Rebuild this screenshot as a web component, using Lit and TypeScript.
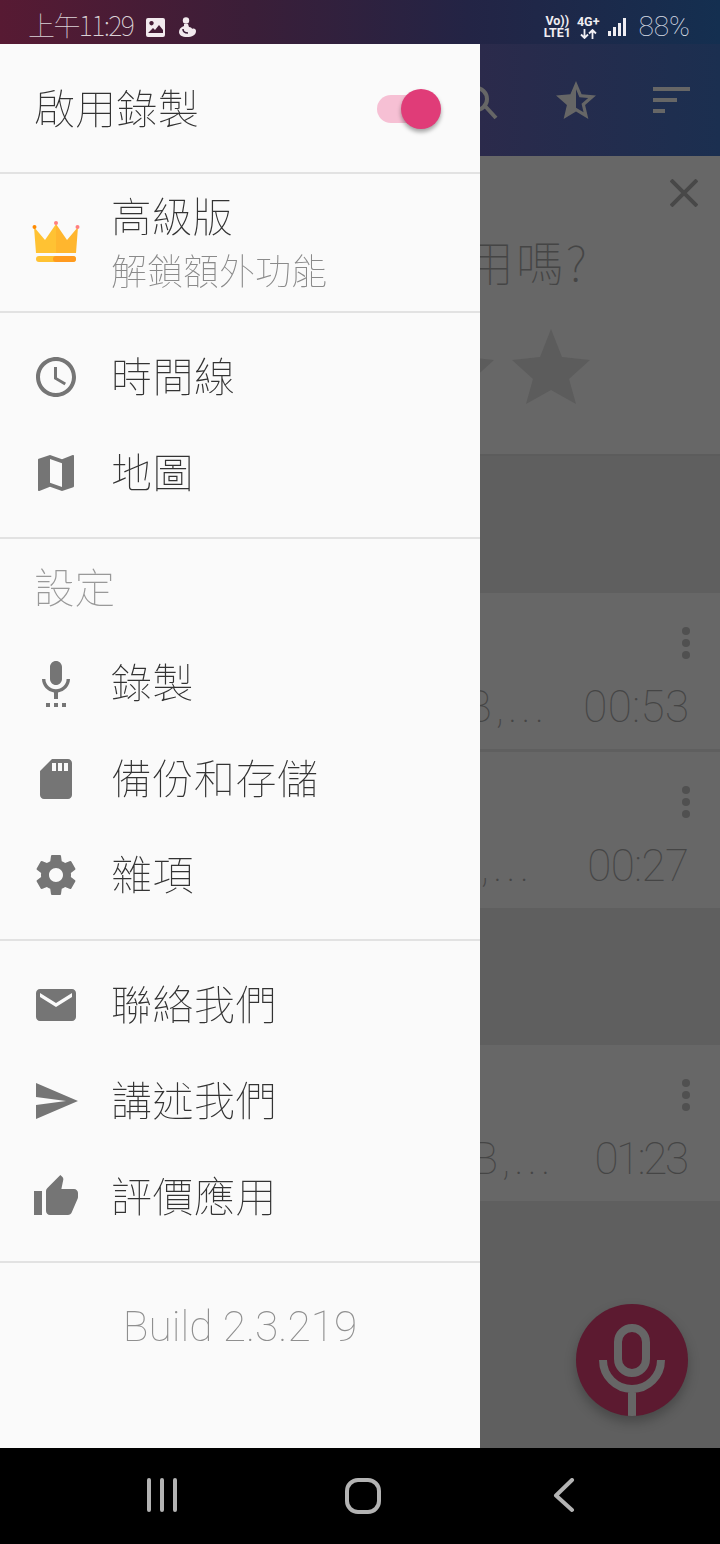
import { LitElement, html, css, svg } from "lit";
import { customElement } from "lit/decorators.js";

const P = {
  clock: "M11.99 2C6.47 2 2 6.48 2 12s4.47 10 9.99 10C17.52 22 22 17.52 22 12S17.52 2 11.99 2zM12 20c-4.42 0-8-3.58-8-8s3.58-8 8-8 8 3.58 8 8-3.58 8-8 8zm.5-13H11v6l5.25 3.15.75-1.23-4.5-2.67z",
  map: "M20.5 3l-.16.03L15 5.1 9 3 3.36 4.9c-.21.07-.36.25-.36.48V20.5c0 .28.22.5.5.5l.16-.03L9 18.9l6 2.1 5.64-1.9c.21-.07.36-.25.36-.48V3.5c0-.28-.22-.5-.5-.5zM15 19l-6-2.11V5l6 2.11V19z",
  voice: "M7 24h2v-2H7v2zm5-11c1.66 0 2.99-1.34 2.99-3L15 4c0-1.66-1.34-3-3-3S9 2.34 9 4v6c0 1.66 1.34 3 3 3zm-1 11h2v-2h-2v2zm4 0h2v-2h-2v2zm4-14h-1.7c0 3-2.54 5.1-5.3 5.1S6.7 13 6.7 10H5c0 3.41 2.72 6.23 6 6.72V20h2v-3.28c3.28-.49 6-3.31 6-6.72z",
  sd: "M18 2h-8L4.02 8 4 20c0 1.1.9 2 2 2h12c1.1 0 2-.9 2-2V4c0-1.1-.9-2-2-2zm-6 6h-2V4h2v4zm3 0h-2V4h2v4zm3 0h-2V4h2v4z",
  gear: "M19.43 12.98c.04-.32.07-.64.07-.98s-.03-.66-.07-.98l2.11-1.65c.19-.15.24-.42.12-.64l-2-3.46c-.12-.22-.39-.3-.61-.22l-2.49 1c-.52-.4-1.08-.73-1.69-.98l-.38-2.65C14.46 2.18 14.25 2 14 2h-4c-.25 0-.46.18-.49.42l-.38 2.65c-.61.25-1.17.59-1.69.98l-2.49-1c-.23-.09-.49 0-.61.22l-2 3.46c-.13.22-.07.49.12.64l2.11 1.65c-.04.32-.07.65-.07.98s.03.66.07.98l-2.11 1.65c-.19.15-.24.42-.12.64l2 3.46c.12.22.39.3.61.22l2.49-1c.52.4 1.08.73 1.69.98l.38 2.65c.03.24.24.42.49.42h4c.25 0 .46-.18.49-.42l.38-2.65c.61-.25 1.17-.59 1.69-.98l2.49 1c.23.09.49 0 .61-.22l2-3.46c.12-.22.07-.49-.12-.64l-2.11-1.65zM12 15.5c-1.93 0-3.5-1.57-3.5-3.5s1.57-3.5 3.5-3.5 3.5 1.57 3.5 3.5-1.57 3.5-3.5 3.5z",
  mail: "M20 4H4c-1.1 0-1.99.9-1.99 2L2 18c0 1.1.9 2 2 2h16c1.1 0 2-.9 2-2V6c0-1.1-.9-2-2-2zm0 4l-8 5-8-5V6l8 5 8-5v2z",
  send: "M2.01 21L23 12 2.01 3 2 10l15 2-15 2z",
  thumb: "M1 21h4V9H1v12zm22-11c0-1.1-.9-2-2-2h-6.31l.95-4.57.03-.32c0-.41-.17-.79-.44-1.06L14.17 1 7.59 7.59C7.22 7.95 7 8.45 7 9v10c0 1.1.9 2 2 2h9c.83 0 1.54-.5 1.84-1.22l3.02-7.05c.09-.23.14-.47.14-.73v-2z",
};

const icon = (d: string) => html`<svg class="ico" viewBox="0 0 24 24"><path d=${d}></path></svg>`;

const row = (d: string, label: string) => html`<div class="row">${icon(d)}<span class="label">${label}</span></div>`;

const clip = (left: string, time: string, gap: number, track: number) => html`
  <div class="rec">
    <svg class="dots" viewBox="0 0 8 36"><circle cx="4" cy="4" r="4"></circle><circle cx="4" cy="16" r="4"></circle><circle cx="4" cy="28" r="4"></circle></svg>
    <div class="recline"><span class="size">${left}</span><span class="time" style="margin-left:${gap}px;letter-spacing:${track}px;margin-right:${-track}px">${time}</span></div>
  </div>`;

const star = svg`<path d="M40 0 L51 28 L79 31 L58 50 L65 75 L40 61 L15 75 L22 50 L1 31 L29 28 Z"></path>`;

@customElement("app-root")
export class AppRoot extends LitElement {
  static styles = css`
    :host { display: block; width: 720px; height: 1544px; overflow: hidden; font-family: "Noto Sans CJK TC", "Noto Sans", sans-serif; font-weight: 100; }
    * { box-sizing: border-box; }
    .status { height: 44px; display: flex; align-items: center; padding: 10px 30px 0 28px; background: linear-gradient(90deg, #571a33 0%, #3a1e38 35%, #232445 65%, #142f50 100%); color: #c9c3cb; }
    .stime { font-size: 27px; line-height: 34px; margin-bottom: 4px; font-weight: 100; letter-spacing: -1.6px; color: #dad2d7; }
    .sico { margin-left: 13px; width: 19px; height: 19px; fill: #f2eaee; flex: none; }
    .sico2 { margin-left: 13px; width: 18px; height: 21px; flex: none; }
    .spacer { flex: 1; }
    .mini { display: flex; flex-direction: column; align-items: center; font: 700 12.500px/12px Roboto, sans-serif; color: #f0eef2; }
    .mini.b { margin-left: 6px; }
    .arrows { width: 17px; height: 10px; margin-top: 1px; fill: none; stroke: #f0eef2; stroke-width: 1.800; }
    .sig { width: 18px; height: 18px; margin-left: 9px; fill: #f0eef2; flex: none; }
    .batt { margin-left: 12px; font: 100 28px/1 Roboto, sans-serif; color: #d8dde5; }

    .body { height: 1404px; display: flex; }
    .drawer { width: 480px; background: #fafafa; display: flex; flex-direction: column; flex: none; color: #333; }
    .head { height: 128px; padding: 0 39px 0 34px; display: flex; align-items: center; justify-content: space-between; font-size: 41px; letter-spacing: .3px; }
    .head span { margin-bottom: 5px; }
    .switch { position: relative; width: 64px; height: 40px; display: flex; align-items: center; margin-top: 1px; }
    .track { width: 44px; height: 28px; border-radius: 14px; background: #f6c0d4; }
    .thumb { position: absolute; right: 0; top: 0; width: 40px; height: 40px; border-radius: 50%; background: #e03c78; box-shadow: 0 3px 4px rgba(0,0,0,.35); }
    .div { height: 2px; background: #e2e2e2; flex: none; }
    .prem { height: 137px; display: flex; align-items: center; padding-left: 32px; }
    .crown { width: 48px; height: 44px; flex: none; margin-top: -2px; }
    .ptext { margin-left: 31px; display: flex; flex-direction: column; gap: 8px; padding-bottom: 4px; }
    .ptitle { font-size: 40.500px; line-height: 48px; }
    .psub { font-size: 36px; line-height: 44px; color: #8a8a8a; }
    .sec { display: flex; flex-direction: column; padding: 16px 0; }
    .sec.tight { padding-top: 0; }
    .row { height: 96px; display: flex; align-items: center; padding-left: 32px; }
    .ico { width: 48px; height: 48px; fill: #757575; flex: none; }
    .label { margin-left: 31px; margin-bottom: 7px; font-size: 41px; line-height: 48px; letter-spacing: .5px; }
    .group { height: 96px; padding: 23px 0 0 34px; font-size: 40.500px; line-height: 48px; color: #999; }
    .build { flex: 1; padding-top: 39px; text-align: center; font: 100 42.500px/50px Roboto, sans-serif; color: #8f8f8f; }

    .panel { position: relative; flex: 1; min-width: 0; overflow: hidden; background: #5f5f5f; display: flex; flex-direction: column; }
    .bar { height: 112px; flex: none; background: linear-gradient(90deg, #2b2a4b 0%, #1b2f50 100%); display: flex; align-items: center; }
    .sb { fill: #666; flex: none; }
    .search { width: 28px; height: 36px; margin-top: 4px; }
    .tstar { width: 40px; height: 38px; margin-left: 48px; }
    .sort { width: 37px; height: 26px; margin-left: 57px; }
    .card { position: relative; height: 300px; flex: none; background: #676767; border-bottom: 2px solid #5c5c5c; }
    .x { position: absolute; right: 22px; top: 23px; width: 28px; height: 28px; stroke: #484848; stroke-width: 4; }
    .q { position: absolute; right: 131px; top: 73px; white-space: nowrap; font-size: 48px; line-height: 62px; letter-spacing: 2px; color: #454545; }
    .stars { display: flex; gap: 16px; justify-content: flex-end; padding: 173px 129px 0 0; }
    .bstar { width: 80px; height: 76px; fill: #5c5c5c; flex: none; }
    .rec { height: 156px; flex: none; background: #676767; position: relative; }
    .dots { position: absolute; right: 30px; top: 34px; width: 8px; height: 36px; fill: #505050; }
    .recline { position: absolute; right: 31px; top: 84px; display: flex; align-items: baseline; white-space: nowrap; color: #454545; }
    .size { font: 100 44px/60px Roboto, sans-serif; letter-spacing: 4px; }
    .time { font: 100 44px/60px Roboto, sans-serif; }
    .m1 { margin-top: 137px; }
    .m2 { margin-top: 3px; }
    .m3 { margin-top: 137px; }
    .fab { position: absolute; left: 96px; bottom: 32px; width: 112px; height: 112px; border-radius: 50%; background: #5c1a30; box-shadow: 0 6px 12px rgba(0,0,0,.25); overflow: hidden; }
    .fab svg { display: block; width: 112px; height: 112px; fill: none; stroke: #666; stroke-width: 8; }

    .nav { height: 96px; background: #000; display: flex; align-items: center; gap: 165px; padding: 0 0 0 144px; }
    .nav svg { width: 36px; height: 36px; fill: none; stroke: #b3b3b3; stroke-width: 4; stroke-linecap: round; stroke-linejoin: round; flex: none; }
    .label, .ptitle, .psub, .group, .head span, .build { will-change: opacity; }
  `;

  render() {
    return html`
      <div class="status">
        <span class="stime">上午11:29</span>
        <svg class="sico" viewBox="0 0 19 19"><path fill-rule="evenodd" d="M2 0h15a2 2 0 0 1 2 2v15a2 2 0 0 1-2 2H2a2 2 0 0 1-2-2V2a2 2 0 0 1 2-2zM2 15h15v-3l-4-5-4 5-2-2-5 5zM5.500 3a2.200 2.200 0 1 0 .01 0z"></path></svg>
        <svg class="sico2" viewBox="0 0 18 21"><circle cx="8" cy="3.500" r="3.200" fill="#f2eaee"></circle><path fill="#f2eaee" d="M6 7h4l1 3c2 0 3 1 3 2 2-1 4 0 4 2 0 4-4 6-9 6-5 0-8-2-8-5 0-3 2-5 5-6z"></path><path fill="none" stroke="#3a1e38" stroke-width="1.600" d="M5 12c0 3 2 4 5 4"></path></svg>
        <span class="spacer"></span>
        <div class="mini"><span>Vo))</span><span>LTE1</span></div>
        <div class="mini b"><span>4G+</span><svg class="arrows" viewBox="0 0 17 10"><path d="M4.500 0v9M1 5.500l3.500 3.500 3.500-3.500M12.500 10V1M9 4.500l3.500-3.500 3.500 3.500"></path></svg></div>
        <svg class="sig" viewBox="0 0 18 18"><rect x="0" y="13" width="3" height="5"></rect><rect x="5" y="9" width="3" height="9"></rect><rect x="10" y="5" width="3" height="13"></rect><rect x="15" y="0" width="3" height="18"></rect></svg>
        <span class="batt">88%</span>
      </div>

      <div class="body">
        <aside class="drawer">
          <div class="head"><span>啟用錄製</span><div class="switch"><div class="track"></div><div class="thumb"></div></div></div>
          <div class="div"></div>
          <div class="prem">
            <svg class="crown" viewBox="0 0 48 44">
              <path fill="#ffc233" d="M2 7 L13 20 L24 4 L24 33 L4 33 Z"></path>
              <path fill="#ffb62e" d="M46 7 L35 20 L24 4 L24 33 L44 33 Z"></path>
              <rect x="4" y="36" width="40" height="6" rx="3" fill="#ffc233"></rect>
              <path fill="#ff9a1f" d="M24 36h17a3 3 0 0 1 0 6H24a3 3 0 0 1 0-6z"></path>
              <circle cx="2.500" cy="7" r="2" fill="#ff8a00"></circle>
              <circle cx="24" cy="3" r="2" fill="#ff7f7f"></circle>
              <circle cx="45.500" cy="7" r="2" fill="#ff7f7f"></circle>
            </svg>
            <div class="ptext"><span class="ptitle">高級版</span><span class="psub">解鎖額外功能</span></div>
          </div>
          <div class="div"></div>
          <div class="sec">${row(P.clock, "時間線")}${row(P.map, "地圖")}</div>
          <div class="div"></div>
          <div class="group">設定</div>
          <div class="sec tight">${row(P.voice, "錄製")}${row(P.sd, "備份和存儲")}${row(P.gear, "雜項")}</div>
          <div class="div"></div>
          <div class="sec">${row(P.mail, "聯絡我們")}${row(P.send, "講述我們")}${row(P.thumb, "評價應用")}</div>
          <div class="div"></div>
          <div class="build">Build 2.3.219</div>
        </aside>

        <section class="panel">
          <div class="bar">
            <svg class="search sb" viewBox="0 0 28 36"><path fill="none" stroke="#666" stroke-width="4" d="M-4 4a11 11 0 1 1 0 22a11 11 0 1 1 0-22zM5 22l11 12"></path></svg>
            <svg class="tstar sb" viewBox="2 2 20 19"><path d="M22 9.240l-7.190-.62L12 2 9.190 8.630 2 9.240l5.460 4.730L5.820 21 12 17.270 18.180 21l-1.630-7.030L22 9.240zM12 15.400V6.100l1.710 4.040 4.380.38-3.320 2.880 1 4.280L12 15.400z"></path></svg>
            <svg class="sort sb" viewBox="0 0 37 26"><rect width="37" height="4"></rect><rect y="11" width="24" height="4"></rect><rect y="22" width="12" height="4"></rect></svg>
          </div>
          <div class="card">
            <svg class="x" viewBox="0 0 28 28"><path d="M1 1L27 27M27 1L1 27"></path></svg>
            <div class="q">用嗎?</div>
            <div class="stars">
              <svg class="bstar" viewBox="0 0 80 76">${star}</svg>
              <svg class="bstar" viewBox="0 0 80 76">${star}</svg>
            </div>
          </div>
          <div class="m1">${clip("B,...", "00:53", 35, 0.4)}</div>
          <div class="m2">${clip(",...", "00:27", 54, -0.6)}</div>
          <div class="m3">${clip("B,...", "01:23", 40, -2.4)}</div>
          <div class="fab">
            <svg viewBox="0 0 112 112"><rect x="42" y="24" width="28" height="45" rx="14"></rect><path d="M27 56a29 29 0 0 0 58 0M56 85v27"></path></svg>
          </div>
        </section>
      </div>

      <div class="nav">
        <svg viewBox="0 0 36 36"><path d="M5 2v30M18 2v30M31 2v30"></path></svg>
        <svg viewBox="0 0 36 36"><rect x="2" y="2" width="32" height="32" rx="11"></rect></svg>
        <svg viewBox="0 0 36 36"><path d="M26 2L10 17.500L26 32"></path></svg>
      </div>
    `;
  }
}
